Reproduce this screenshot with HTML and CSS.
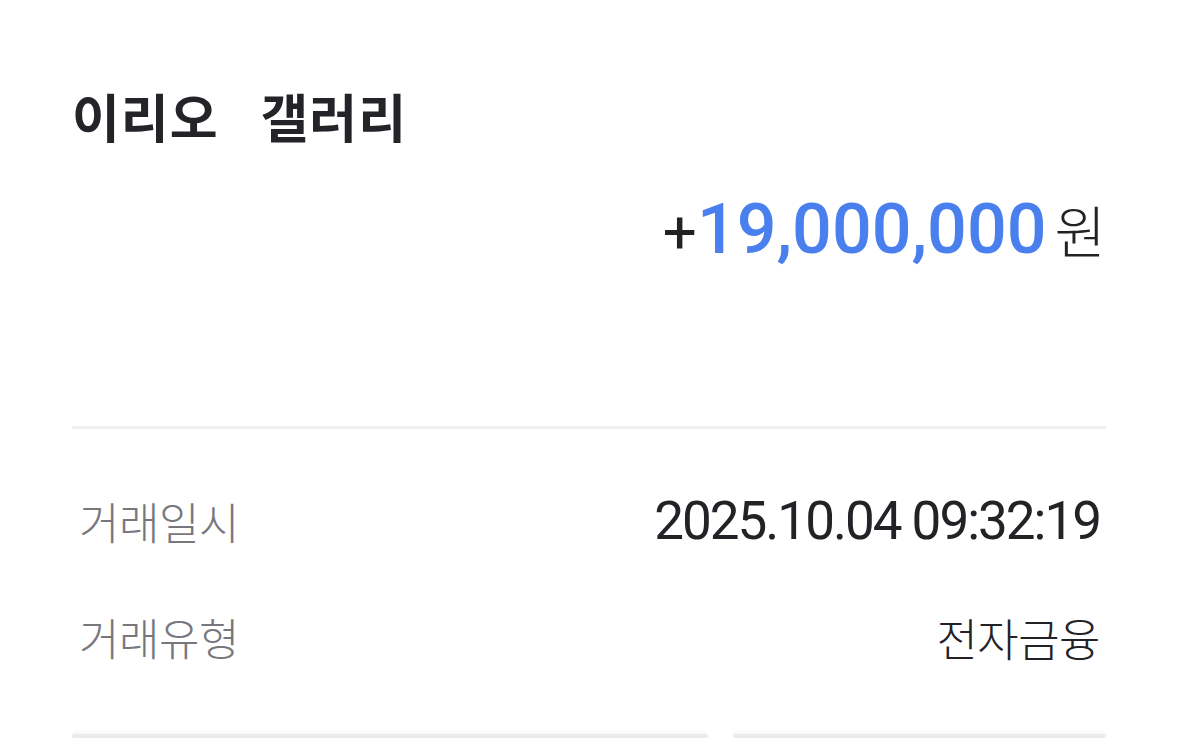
FILE: index.html
```html
<!DOCTYPE html>
<html lang="ko">
<head>
    <meta charset="UTF-8">
    <title>거래내역 상세</title>
    <link rel="stylesheet" href="styles.css">
</head>
<body>
    <div class="page">
        <h1 class="store">이리오<span class="store-sub">갤러리</span></h1>
        <div class="amount">
            <span class="sign">+</span>
            <span class="num">19,000,000</span>
            <span class="won">원</span>
        </div>

        <div class="divider"></div>

        <div class="info">
            <div class="row">
                <span class="label">거래일시</span>
                <span class="value date">2025.10.04 09:32:19</span>
            </div>
            <div class="row">
                <span class="label">거래유형</span>
                <span class="value">전자금융</span>
            </div>
        </div>

        <div class="btns">
            <span class="btn"></span>
            <span class="btn small"></span>
        </div>
    </div>
</body>
</html>
```

FILE: styles.css
```css
* {
    margin: 0;
    padding: 0;
    box-sizing: border-box;
}
html, body {
    background: #fff;
    overflow: hidden;
}
body {
    font-family: "Noto Sans CJK KR", "Noto Sans", sans-serif;
    color: #222227;
}
.page {
    padding: 80px 73px 0 72px;
}

/* 상호명 */
.store {
    font-size: 52px;
    font-weight: 700;
    line-height: 72px;
    letter-spacing: 1px;
    color: #232328;
}
.store-sub {
    margin-left: 42px;
}

/* 금액 */
.amount {
    display: flex;
    justify-content: flex-end;
    align-items: baseline;
    margin-top: 36px;
    height: 80px;
}
.sign {
    font-family: "Roboto", sans-serif;
    font-size: 60px;
    color: #222;
}
.num {
    font-family: "Roboto", sans-serif;
    font-size: 70px;
    font-weight: 500;
    color: #4a80ee;
    margin-right: 8px;
}
.won {
    font-size: 56px;
    font-weight: 300;
    color: #222;
}

.divider {
    height: 3px;
    margin-top: 158px;
    background: #eeeff1;
}

/* 상세 정보 */
.info {
    padding: 46px 6px 0 7px;
}
.row {
    display: flex;
    justify-content: space-between;
    align-items: center;
    height: 116px;
}
.row:first-child {
    margin-top: -12px;
}
.label {
    font-size: 44px;
    font-weight: 300;
    color: #77777d;
    letter-spacing: -0.5px;
}
.value {
    font-size: 45px;
    font-weight: 300;
    color: #222227;
    letter-spacing: -0.5px;
}
.date {
    font-family: "Roboto", sans-serif;
    font-weight: 400;
    font-size: 53px;
    letter-spacing: -2px;
}

.btns {
    display: flex;
    gap: 25px;
    margin-top: 39px;
}
.btn {
    flex: 636;
    height: 4px;
    border-radius: 2px;
    background: #ebebeb;
    box-shadow: 0 -3px 2px #fafafa;
}
.btn.small {
    flex: 373;
}
```
